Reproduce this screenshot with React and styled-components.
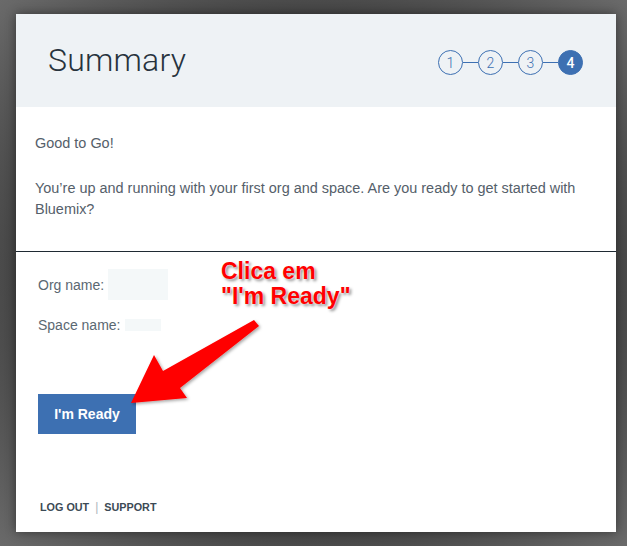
import styled, { createGlobalStyle } from "styled-components";

const GlobalStyle = createGlobalStyle`
  html, body {
    margin: 0;
    padding: 0;
    background: #545454;
  }
  body {
    width: 627px;
    height: 546px;
    overflow: hidden;
    background: radial-gradient(ellipse at center, #3a3a3a 55%, #6a6a6a 100%);
  }
`;

const steps = [1, 2, 3, 4];
const activeStep = 4;

export default function App() {
  return (
    <>
      <GlobalStyle />
      <Page>
        <Card>
          <Header>
            <Title>Summary</Title>
            <Steps>
              {steps.map((step, i) => (
                <StepItem key={step}>
                  {i > 0 && <Connector />}
                  <StepCircle $active={step === activeStep}>{step}</StepCircle>
                </StepItem>
              ))}
            </Steps>
          </Header>

          <Intro>
            <Paragraph>Good to Go!</Paragraph>
            <Paragraph>
              You’re up and running with your first org and space. Are you ready
              to get started with Bluemix?
            </Paragraph>
          </Intro>

          <Details>
            <Field>
              Org name:<Redacted $w={60} $h={31} />
            </Field>
            <Field>
              Space name:<Redacted $w={36} $h={12} />
            </Field>
            <ReadyButton>I'm Ready</ReadyButton>
          </Details>

          <Footer>
            <FooterLink>LOG OUT</FooterLink>
            <Separator>|</Separator>
            <FooterLink>SUPPORT</FooterLink>
          </Footer>

          <Callout>
            Clica em
            <br />
            "I'm Ready"
          </Callout>
          <Arrow viewBox="0 0 627 546">
            <defs>
              <filter id="arrowShadow" x="-20%" y="-20%" width="140%" height="140%">
                <feDropShadow dx="1.5" dy="1.5" stdDeviation="1.5" floodColor="#000" floodOpacity="0.35" />
              </filter>
            </defs>
            <polygon
              points="131,403 154,355 163,371 254,320 259,326 180,388 187,398"
              fill="#ff0000"
              filter="url(#arrowShadow)"
            />
          </Arrow>
        </Card>
      </Page>
    </>
  );
}

const Page = styled.div`
  padding: 14px 11px 14px 16px;
`;

const Card = styled.div`
  position: relative;
  width: 600px;
  height: 518px;
  background: #ffffff;
  box-shadow: 0 0 10px rgba(0, 0, 0, 0.45);
  display: flex;
  flex-direction: column;
  font-family: "Liberation Sans", Arial, sans-serif;
`;

const Header = styled.div`
  height: 93px;
  background: #eef2f5;
  display: flex;
  align-items: center;
  justify-content: space-between;
  padding: 0 33px 0 32px;
  box-sizing: border-box;
`;

const Title = styled.h1`
  margin: 0 0 2px;
  font-family: Roboto, "Liberation Sans", sans-serif;
  font-weight: 300;
  font-size: 32px;
  color: #27333d;
  letter-spacing: 0.2px;
`;

const Steps = styled.div`
  display: flex;
  align-items: center;
  margin-top: 4px;
`;

const StepItem = styled.div`
  display: flex;
  align-items: center;
`;

const Connector = styled.span`
  width: 15px;
  height: 1px;
  background: #3d70b2;
`;

const StepCircle = styled.span`
  width: 25px;
  height: 25px;
  box-sizing: border-box;
  border-radius: 50%;
  border: 1px solid #3d70b2;
  display: flex;
  align-items: center;
  justify-content: center;
  font-family: Roboto, "Liberation Sans", sans-serif;
  font-size: 14px;
  font-weight: ${(p) => (p.$active ? 500 : 300)};
  color: ${(p) => (p.$active ? "#ffffff" : "#3d70b2")};
  background: ${(p) => (p.$active ? "#3d70b2" : "transparent")};
`;

const Intro = styled.div`
  padding: 26px 20px 31px 19px;
  border-bottom: 1px solid #1f2a33;
  display: flex;
  flex-direction: column;
  gap: 24px;
`;

const Paragraph = styled.p`
  margin: 0;
  font-size: 14.45px;
  line-height: 21px;
  color: #55606a;
`;

const Details = styled.div`
  padding: 17px 22px 0;
  display: flex;
  flex-direction: column;
  align-items: flex-start;
  gap: 9px;
`;

const Field = styled.div`
  display: flex;
  align-items: center;
  height: 31px;
  font-size: 14px;
  color: #5a6872;
`;

const Redacted = styled.span`
  display: inline-block;
  width: ${(p) => p.$w}px;
  height: ${(p) => p.$h}px;
  margin-left: 4px;
  background: #f4f8f9;
`;

const ReadyButton = styled.button`
  margin-top: 45px;
  width: 98px;
  height: 40px;
  border: none;
  background: #3d70b2;
  color: #ffffff;
  font-family: "Liberation Sans", Arial, sans-serif;
  font-weight: 700;
  font-size: 14px;
  padding: 0;
`;

const Footer = styled.div`
  margin-top: auto;
  padding: 0 24px 18px;
  display: flex;
  align-items: center;
  gap: 6px;
`;

const FooterLink = styled.span`
  font-size: 10.8px;
  font-weight: 700;
  color: #3c4a55;
`;

const Separator = styled.span`
  font-size: 12px;
  color: #a9b4bc;
`;

const Callout = styled.div`
  position: absolute;
  left: 205px;
  top: 245px;
  font-family: "Liberation Sans", Arial, sans-serif;
  font-weight: 700;
  font-size: 23px;
  line-height: 25px;
  color: #ff0000;
  text-shadow: 0 0 2px #ffffff, 2px 2px 3px rgba(0, 0, 0, 0.45);
`;

const Arrow = styled.svg`
  position: absolute;
  left: -16px;
  top: -14px;
  width: 627px;
  height: 546px;
  pointer-events: none;
`;
